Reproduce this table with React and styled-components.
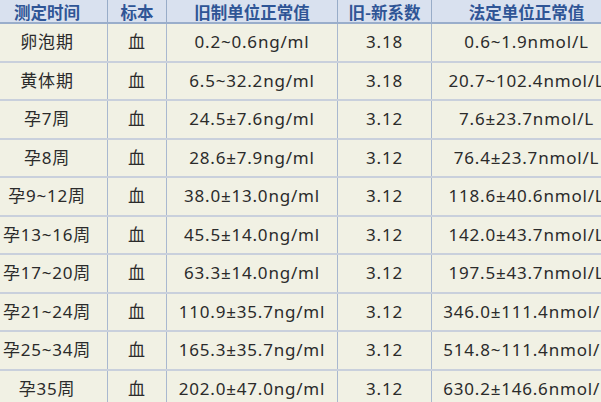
import React from 'react';
import styled, { createGlobalStyle } from 'styled-components';

const GlobalStyle = createGlobalStyle`
  html, body {
    margin: 0;
    padding: 0;
    background: #f1f1e4;
    overflow: hidden;
  }
  body {
    font-family: "Noto Sans", "Noto Sans CJK SC", sans-serif;
  }
`;

const rows = [
  ['卵泡期', '血', '0.2~0.6ng/ml', '3.18', '0.6~1.9nmol/L'],
  ['黄体期', '血', '6.5~32.2ng/ml', '3.18', '20.7~102.4nmol/L'],
  ['孕7周', '血', '24.5±7.6ng/ml', '3.12', '7.6±23.7nmol/L'],
  ['孕8周', '血', '28.6±7.9ng/ml', '3.12', '76.4±23.7nmol/L'],
  ['孕9~12周', '血', '38.0±13.0ng/ml', '3.12', '118.6±40.6nmol/L'],
  ['孕13~16周', '血', '45.5±14.0ng/ml', '3.12', '142.0±43.7nmol/L'],
  ['孕17~20周', '血', '63.3±14.0ng/ml', '3.12', '197.5±43.7nmol/L'],
  ['孕21~24周', '血', '110.9±35.7ng/ml', '3.12', '346.0±111.4nmol/L'],
  ['孕25~34周', '血', '165.3±35.7ng/ml', '3.12', '514.8~111.4nmol/L'],
  ['孕35周', '血', '202.0±47.0ng/ml', '3.12', '630.2±146.6nmol/L'],
];

const headers = ['测定时间', '标本', '旧制单位正常值', '旧-新系数', '法定单位正常值'];
const widths = [121, 59, 171, 94, 190];

const App = () => {
  return (
    <>
      <GlobalStyle />
      <Frame>
        <Table>
          <colgroup>
            {widths.map((w, i) => (
              <col key={i} style={{ width: w }} />
            ))}
          </colgroup>
          <thead>
            <tr>
              {headers.map((h) => (
                <HeadCell key={h}>{h}</HeadCell>
              ))}
            </tr>
          </thead>
          <tbody>
            {rows.map((r) => (
              <Row key={r[0]}>
                {r.map((c, i) => (
                  <Cell key={i}>{c}</Cell>
                ))}
              </Row>
            ))}
          </tbody>
        </Table>
      </Frame>
    </>
  );
};

const Frame = styled.div`
  width: 601px;
  height: 402px;
  overflow: hidden;
`;

const Table = styled.table`
  border-collapse: collapse;
  table-layout: fixed;
  width: 635px;
  margin-left: -14px;
  background: #f1f1e4;
`;

const HeadCell = styled.th`
  height: 23px;
  padding: 1px 0 0;
  box-sizing: border-box;
  background: #d9e1ef;
  color: #2f5596;
  font-family: "Noto Sans CJK SC", sans-serif;
  font-size: 16.5px;
  font-weight: 700;
  text-align: center;
  vertical-align: middle;
  line-height: 18px;
  border: 1px solid #98acc8;
  border-top: none;
  border-bottom: 2px solid #9aaecb;
  white-space: nowrap;
`;

const Row = styled.tr`
  height: 38.5px;
`;

const Cell = styled.td`
  padding: 0;
  color: #2b2b2b;
  font-size: 17px;
  letter-spacing: 0.8px;
  text-align: center;
  vertical-align: middle;
  line-height: 20px;
  white-space: nowrap;
  border: 1px solid #a9b8cf;
  border-bottom: 2px solid #c9d0dc;
`;

export default App;
